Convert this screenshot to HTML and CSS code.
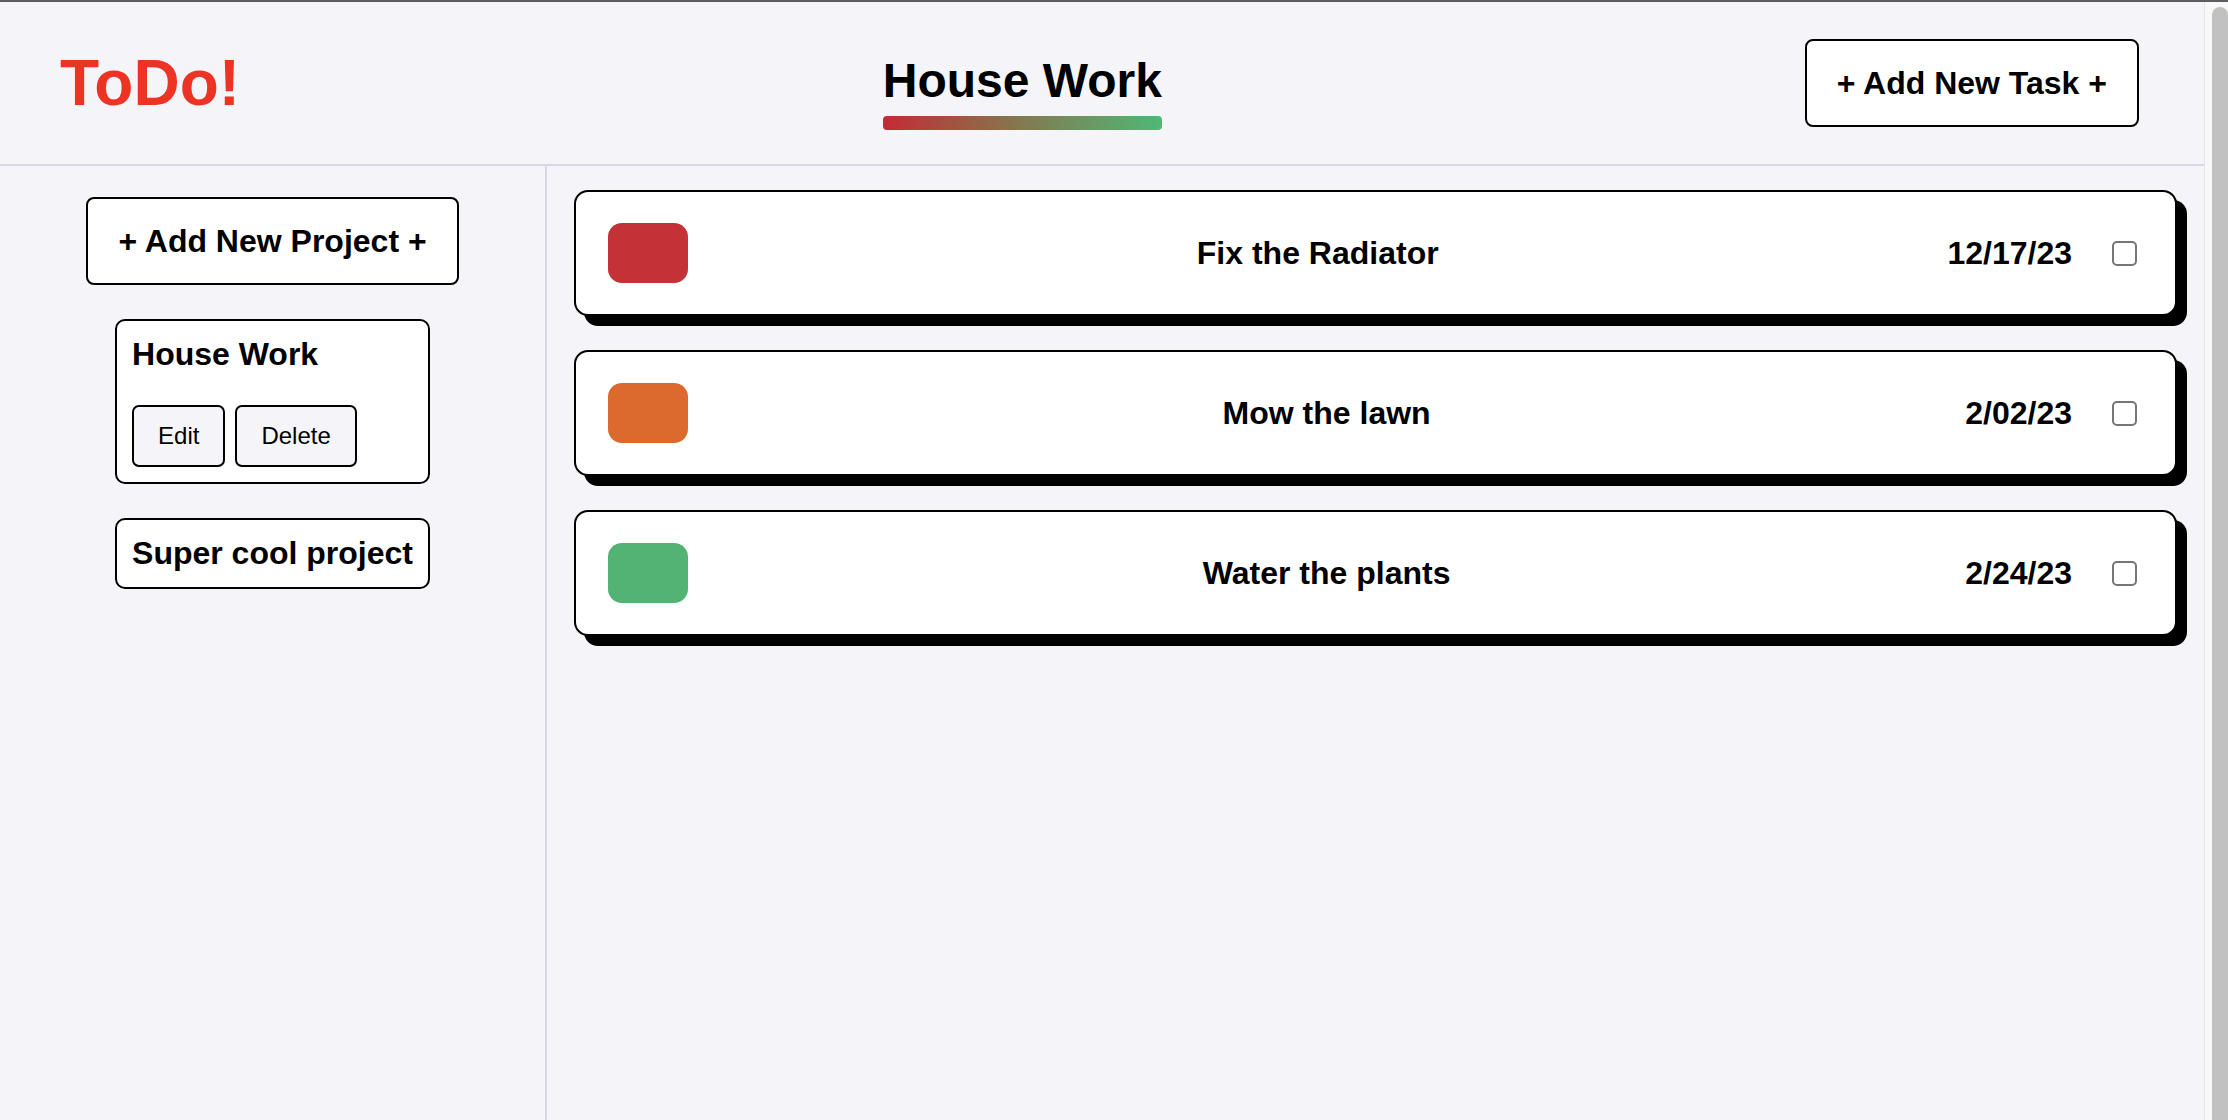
FILE: index.html
```html
<!DOCTYPE html>
<html lang="en">
<head>
<meta charset="utf-8">
<title>ToDo!</title>
<link rel="stylesheet" href="styles.css">
</head>
<body>
<div class="app">
  <div class="page">
    <header class="topbar">
      <div class="logo">ToDo!</div>
      <h1 class="project-title">House Work</h1>
      <button class="add-btn">+ Add New Task +</button>
    </header>
    <div class="layout">
      <aside class="sidebar">
        <button class="add-btn">+ Add New Project +</button>
        <div class="project-list">
          <div class="project-card">
            <div class="project-name">House Work</div>
            <div class="project-actions">
              <button class="small-btn">Edit</button>
              <button class="small-btn">Delete</button>
            </div>
          </div>
          <div class="project-card">
            <div class="project-name no-actions">Super cool project</div>
          </div>
        </div>
      </aside>
      <main class="tasks">
        <div class="task-card">
          <span class="swatch swatch-high"></span>
          <span class="task-name">Fix the Radiator</span>
          <span class="task-date">12/17/23</span>
          <input type="checkbox" class="task-check">
        </div>
        <div class="task-card">
          <span class="swatch swatch-mid"></span>
          <span class="task-name">Mow the lawn</span>
          <span class="task-date">2/02/23</span>
          <input type="checkbox" class="task-check">
        </div>
        <div class="task-card">
          <span class="swatch swatch-low"></span>
          <span class="task-name">Water the plants</span>
          <span class="task-date">2/24/23</span>
          <input type="checkbox" class="task-check">
        </div>
      </main>
    </div>
  </div>
  <div class="scrollbar" aria-hidden="true">
    <div class="scroll-thumb"></div>
  </div>
</div>
</body>
</html>
```

FILE: styles.css
```css
* {
  box-sizing: border-box;
}

html, body {
  margin: 0;
  padding: 0;
  height: 100%;
  overflow: hidden;
}

body {
  font-family: "Liberation Sans", Arial, sans-serif;
  color: #000;
  background: #f5f5f9;
  border-top: 2px solid #5e5e62;
}

.app {
  display: flex;
  height: calc(100vh - 2px);
  background: #f5f5f9;
}

.page {
  flex: 1;
  min-width: 0;
  overflow: hidden;
}

.scrollbar {
  width: 24px;
  flex: none;
  display: flex;
  flex-direction: column;
  padding: 5px 0 0 7px;
  background: #f8f8f8;
  border-left: 1px solid #e6e6e6;
}

.scroll-thumb {
  flex: 1;
  background: #c1c1c1;
  border-radius: 8px 8px 0 0;
}

.topbar {
  height: 164px;
  display: flex;
  align-items: center;
  justify-content: space-between;
  padding: 0 65px 0 60px;
  border-bottom: 2px solid #d8d7e8;
}

.logo {
  font-size: 64px;
  font-weight: 700;
  color: #ec3324;
  line-height: 1;
}

.project-title {
  position: relative;
  margin: -6px 0 0;
  font-size: 48px;
  font-weight: 700;
  line-height: 55px;
}

.project-title::after {
  content: "";
  position: absolute;
  left: 0;
  right: 0;
  top: 63px;
  height: 14px;
  border-radius: 4px;
  background: linear-gradient(90deg, #c42b34 0%, #827a50 50%, #50b877 100%);
}

.add-btn {
  height: 88px;
  padding: 0 30px;
  background: #fff;
  border: 2px solid #000;
  border-radius: 8px;
  font-family: "Liberation Sans", Arial, sans-serif;
  font-size: 32px;
  font-weight: 700;
  color: #000;
}

.layout {
  display: grid;
  grid-template-columns: 547px 1fr;
  min-height: 982px;
}

.sidebar {
  display: flex;
  flex-direction: column;
  align-items: center;
  gap: 34px;
  padding-top: 31px;
  border-right: 2px solid #d8d7e8;
}

.project-list {
  display: flex;
  flex-direction: column;
  gap: 34px;
}

.project-card {
  background: #fff;
  border: 2px solid #000;
  border-radius: 10px;
  padding: 15px;
}

.project-name {
  font-size: 32px;
  font-weight: 700;
  line-height: 37px;
  margin-bottom: 32px;
}

.project-name.no-actions {
  margin-bottom: 0;
}

.project-actions {
  display: flex;
  gap: 10px;
}

.small-btn {
  padding: 15px 24px;
  background: #f5f5f9;
  border: 2px solid #000;
  border-radius: 7px;
  font-family: "Liberation Sans", Arial, sans-serif;
  font-size: 24px;
  line-height: 28px;
  color: #000;
}

.tasks {
  display: flex;
  flex-direction: column;
  gap: 34px;
  padding: 24px 27px;
}

.task-card {
  display: flex;
  align-items: center;
  gap: 20px;
  padding: 31px 38px 31px 32px;
  background: #fff;
  border: 2px solid #000;
  border-radius: 14px;
  box-shadow: 10px 10px 0 #000;
}

.swatch {
  width: 80px;
  height: 60px;
  border-radius: 14px;
  flex: none;
}

.swatch-high { background: #c43137; }
.swatch-mid { background: #dc6a2c; }
.swatch-low { background: #53b374; }

.task-name {
  flex: 1;
  text-align: center;
  font-size: 32px;
  font-weight: 700;
}

.task-date {
  font-size: 32px;
  font-weight: 700;
}

.task-check {
  appearance: none;
  -webkit-appearance: none;
  width: 25px;
  height: 25px;
  margin: 0 0 0 20px;
  border: 2px solid #767676;
  border-radius: 5px;
  background: #fff;
  flex: none;
}
```
